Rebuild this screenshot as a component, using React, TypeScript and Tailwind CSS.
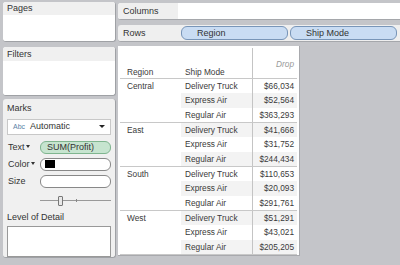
export default function App() {
  const groups = [
    { region: 'Central', values: ['$66,034', '$52,564', '$363,293'] },
    { region: 'East', values: ['$41,666', '$31,752', '$244,434'] },
    { region: 'South', values: ['$110,653', '$20,093', '$291,761'] },
    { region: 'West', values: ['$51,291', '$43,021', '$205,205'] },
  ];
  const modes = ['Delivery Truck', 'Express Air', 'Regular Air'];

  const caret = (
    <span className="inline-block ml-[1px] mb-[1px] w-0 h-0 border-l-[2.5px] border-r-[2.5px] border-t-[3px] border-l-transparent border-r-transparent border-t-[#333]" />
  );

  return (
    <div
      className="w-[400px] h-[265px] overflow-hidden bg-[#c4c5c9] flex text-[9px] text-[#333] leading-none"
      style={{ fontFamily: '"Liberation Sans", Arial, sans-serif' }}
    >
      {/* left shelf column */}
      <div className="w-[113px] ml-[3px] mt-[2px] flex flex-col shrink-0">
        <div className="h-[40px] rounded-[3px] bg-white border-r border-b border-[#9fa1a5] overflow-hidden flex flex-col">
          <div className="h-[13px] bg-[#f0f0f0] pl-[4px] flex items-center">Pages</div>
        </div>
        <div className="h-[49px] mt-[5px] rounded-[3px] bg-white border-r border-b border-[#9fa1a5] overflow-hidden flex flex-col">
          <div className="h-[14px] bg-[#f0f0f0] pl-[4px] flex items-center">Filters</div>
        </div>
        <div className="h-[159px] mt-[3px] rounded-[3px] bg-[#f0f0f0] border-r border-b border-[#9fa1a5] flex flex-col px-[4px] pt-[5px]">
          <div className="h-[10px] flex items-center">Marks</div>
          <div className="mt-[5px] h-[16px] bg-white border border-[#c8c8c8] flex items-center pl-[5px] pr-[5px]">
            <span className="text-[7px] text-[#5b7fa6]">Abc</span>
            <span className="ml-[5px]">Automatic</span>
            <span className="ml-auto w-0 h-0 border-l-[3px] border-r-[3px] border-t-[3.5px] border-l-transparent border-r-transparent border-t-[#222]" />
          </div>
          <div className="mt-[6px] flex items-center h-[13px]">
            <div className="w-[33px] flex items-center pl-[1px]">Text{caret}</div>
            <div className="flex-1 h-[13px] rounded-[6px] bg-[#c6e4cf] border border-[#7fb58f] flex items-center pl-[6px]">
              SUM(Profit)
            </div>
          </div>
          <div className="mt-[4px] flex items-center h-[13px]">
            <div className="w-[33px] flex items-center pl-[1px]">Color{caret}</div>
            <div className="flex-1 h-[13px] rounded-[6px] bg-white border border-[#888] flex items-center pl-[4px]">
              <span className="w-[10px] h-[8px] bg-black" />
            </div>
          </div>
          <div className="mt-[4px] flex items-center h-[13px]">
            <div className="w-[33px] pl-[1px]">Size</div>
            <div className="flex-1 h-[13px] rounded-[6px] bg-white border border-[#888]" />
          </div>
          <div className="mt-[8px] ml-[33px] h-[10px] relative flex items-center">
            <div className="w-full h-px bg-[#999]" />
            <div className="absolute left-[18px] top-0 w-[5px] h-[10px] bg-[#e8e8e8] border border-[#777] rounded-[1px]" />
            <div className="absolute left-[36px] top-[3px] w-px h-[3px] bg-[#888]" />
          </div>
          <div className="mt-[7px] h-[10px] flex items-center">Level of Detail</div>
          <div className="mt-[4px] h-[31px] bg-white border border-[#999]" />
        </div>
      </div>

      {/* right side */}
      <div className="flex-1 ml-[2px] flex flex-col pt-[3px]">
        <div className="h-[17px] rounded-l-[3px] bg-white flex overflow-hidden border-b border-[#a5a7ab]">
          <div className="w-[60px] bg-[#efefef] pl-[5px] flex items-center">Columns</div>
        </div>
        <div className="h-[17px] mt-[5px] rounded-l-[3px] bg-[#efefef] flex items-center border-b border-[#a5a7ab]">
          <div className="w-[63px] pl-[5px]">Rows</div>
          <div className="w-[107px] h-[14px] rounded-[6px] bg-[#c9dcf3] border border-[#7895b8] flex items-center pl-[15px]">Region</div>
          <div className="w-[107px] h-[14px] ml-[2px] rounded-[6px] bg-[#c9dcf3] border border-[#7895b8] flex items-center pl-[15px]">Ship Mode</div>
        </div>

        {/* table */}
        <div className="mt-[4px] w-[182px] h-[210px] bg-white border-r border-b border-[#a8a9ad] pl-[2px] pr-[2px] pt-[2px] text-[8.3px] text-[#3a3a3a]">
          <div className="flex h-[31px] border-b border-[#c8c8c8]">
            <div className="w-[61px] pl-[7px] flex items-end pb-[2px]">Region</div>
            <div className="w-[72px] pl-[4px] flex items-end pb-[2px] border-r border-[#c4c4c4]">Ship Mode</div>
            <div className="flex-1 flex justify-end pr-[3px] pt-[12px] italic text-[#999]">Drop</div>
          </div>
          {groups.map((g, gi) => (
            <div key={g.region} className="flex border-b border-[#c8c8c8]">
              <div className="w-[61px] pl-[7px] pt-[3px]">{g.region}</div>
              <div className="flex-1 flex flex-col">
                {modes.map((m, mi) => {
                  const shaded = (gi * 3 + mi) % 2 === 1;
                  return (
                    <div key={m} className={`flex h-[14.33px] items-center ${shaded ? 'bg-[#f3f3f3]' : ''}`}>
                      <div className="w-[72px] h-full pl-[4px] flex items-center border-r border-[#c4c4c4]">{m}</div>
                      <div className="flex-1 text-right pr-[3px]">{g.values[mi]}</div>
                    </div>
                  );
                })}
              </div>
            </div>
          ))}
        </div>
      </div>
    </div>
  );
}
